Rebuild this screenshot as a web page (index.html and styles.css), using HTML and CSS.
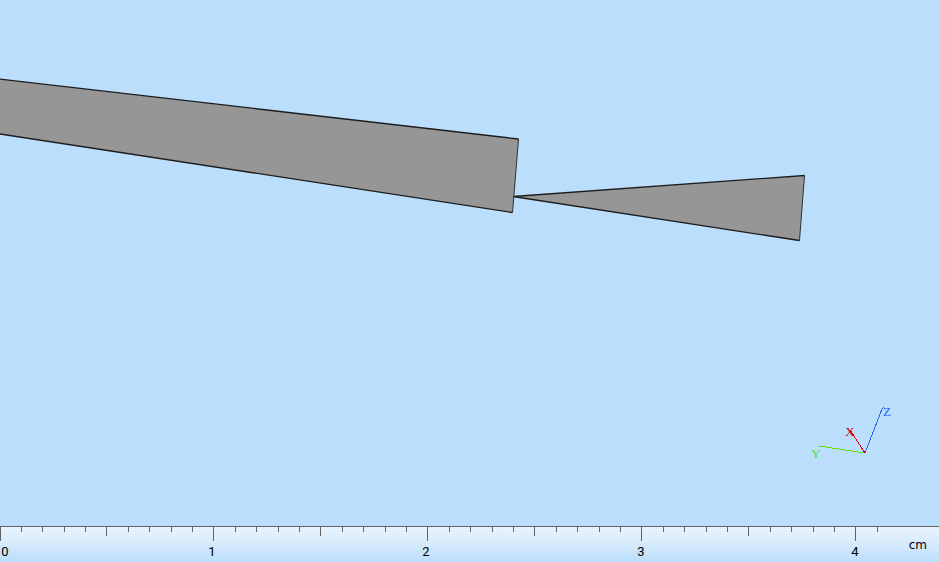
FILE: index.html
```
<!DOCTYPE html>
<html lang="en">
<head>
<meta charset="utf-8">
<title>Model view</title>
<link rel="stylesheet" href="styles.css">
</head>
<body>
<main class="viewport">
  <svg class="scene" role="img" aria-label="Section view">
    <g class="solid">
      <path d="M-10 78 L518.500 139 L512.500 212.500 L-10 132.500 Z"/>
      <path d="M513 196.500 L804.500 175.500 L799.500 240.500 Z"/>
    </g>
    <g class="outline">
      <path d="M-10 78 L518.500 139 M512.500 212.500 L-10 132.500 M513 196.500 L804.500 175.500 M799.500 240.500 L513 196.500"/>
      <path class="side" d="M518.500 139 L512.500 212.500 M804.500 175.500 L799.500 240.500"/>
    </g>
    <g class="axes">
      <path class="axis-z" d="M865 453 L882 409 L884 407"/>
      <path class="axis-y" d="M865 453 L819 446"/>
      <path class="axis-x" d="M865 453 L850 430"/>
      <text class="label-z" x="887" y="416">Z</text>
      <text class="label-y" x="816" y="458">Y</text>
      <text class="label-x" x="850" y="436">X</text>
    </g>
  </svg>
</main>
<footer class="ruler">
  <svg class="scale" role="img" aria-label="Scale in centimetres">
    <path class="ticks" d="M0 0V14h1V0zM21 0V5h1V0zM42 0V5h1V0zM64 0V5h1V0zM85 0V5h1V0zM106 0V9h1V0zM128 0V5h1V0zM149 0V5h1V0zM171 0V5h1V0zM192 0V5h1V0zM213 0V14h1V0zM235 0V5h1V0zM256 0V5h1V0zM278 0V5h1V0zM299 0V5h1V0zM320 0V9h1V0zM342 0V5h1V0zM363 0V5h1V0zM385 0V5h1V0zM406 0V5h1V0zM427 0V14h1V0zM449 0V5h1V0zM470 0V5h1V0zM492 0V5h1V0zM513 0V5h1V0zM534 0V9h1V0zM556 0V5h1V0zM577 0V5h1V0zM599 0V5h1V0zM620 0V5h1V0zM641 0V14h1V0zM663 0V5h1V0zM684 0V5h1V0zM706 0V5h1V0zM727 0V5h1V0zM748 0V9h1V0zM770 0V5h1V0zM791 0V5h1V0zM813 0V5h1V0zM834 0V5h1V0zM855 0V14h1V0zM877 0V5h1V0z"/>
    <g class="numbers">
      <text x="5" y="29">0</text>
      <text x="212" y="29">1</text>
      <text x="426" y="29">2</text>
      <text x="641" y="29">3</text>
      <text x="855" y="29">4</text>
    </g>
  </svg>
  <span class="unit">cm</span>
</footer>
</body>
</html>
```
FILE: styles.css
```
body {
  margin: 0;
  height: 100vh;
  display: flex;
  flex-direction: column;
  overflow: hidden;
  background: #badefb;
  font-family: "Liberation Sans", Arial, sans-serif;
}
.viewport {
  flex: 1;
  min-height: 0;
}
.scene, .scale {
  display: block;
  width: 100%;
  height: 100%;
}
.solid {
  fill: #969696;
}
.outline {
  fill: none;
  stroke: #1c1c1c;
  stroke-width: 1.3;
}
.side {
  stroke: #303030;
  stroke-width: 1;
}
.axes {
  font: 13px "Liberation Serif", serif;
  text-anchor: middle;
}
.axes path {
  fill: none;
  stroke-width: 1;
  shape-rendering: crispEdges;
}
.axis-x { stroke: #d00000; }
.axis-y { stroke: #62de10; }
.axis-z { stroke: #2864f8; }
.label-x { fill: #d00000; }
.label-y { fill: #62de10; }
.label-z { fill: #2864f8; }
.ruler {
  flex: none;
  display: flex;
  height: 35px;
  border-top: 1px solid #646464;
  background: linear-gradient(#e9f4fd, #d5eafb 50%, #badefb);
}
.scale {
  flex: 1;
  min-width: 0;
  overflow: visible;
}
.ticks {
  fill: #646464;
  shape-rendering: crispEdges;
}
.numbers {
  font: 13px Roboto, sans-serif;
  text-anchor: middle;
}
.unit {
  padding: 10px 12px 0 0;
  font: 12px/16px "DejaVu Sans", sans-serif;
}
```
